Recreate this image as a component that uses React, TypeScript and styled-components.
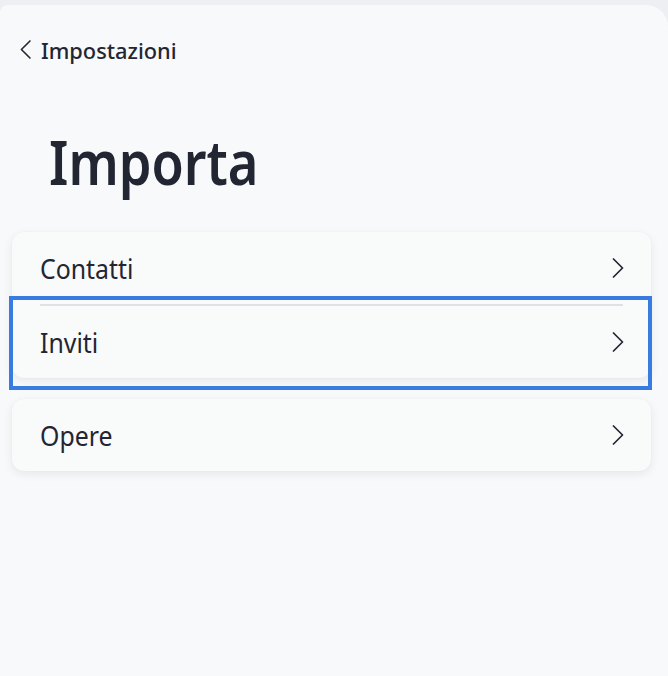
import React from "react";
import styled, { createGlobalStyle } from "styled-components";

const Global = createGlobalStyle`
  html, body { margin: 0; padding: 0; background: #eeeff2; }
  body { font-family: "Noto Sans", "Open Sans", sans-serif; color: #222633; }
`;

const Panel = styled.div`
  margin-top: 5px;
  min-height: 671px;
  background: #f8f9fa;
  border-radius: 8px 22px 0 0;
  box-sizing: border-box;
  padding: 0 17px 0 12px;
`;

const BackBar = styled.div`
  display: flex;
  align-items: center;
  gap: 10px;
  height: 89px;
  padding-left: 8px;
  box-sizing: border-box;
`;

const Condensed = styled.span<{ $sx: number }>`
  display: inline-block;
  transform: scaleX(${(p) => p.$sx});
  transform-origin: left center;
  white-space: nowrap;
`;

const BackLabel = styled.span`
  font-size: 22px;
  font-weight: 500;
  color: #222633;
`;

const Title = styled.h1`
  margin: 0;
  padding: 25px 0 0 37px;
  font-size: 62px;
  font-weight: 600;
  line-height: 84px;
  color: #222633;
`;

const Card = styled.div<{ $top: number }>`
  margin-top: ${(p) => p.$top}px;
  background: #f9fafa;
  border-radius: 12px;
  box-shadow: 0 3px 10px rgba(20, 30, 50, 0.08), 0 0 2px rgba(20, 30, 50, 0.04);
  display: flex;
  flex-direction: column;
`;

const Row = styled.div`
  position: relative;
  height: 72px;
  display: flex;
  align-items: center;
  justify-content: space-between;
  padding: 0 27px 0 28px;
  font-size: 27px;
  color: #222633;
`;

const Divider = styled.div`
  height: 2px;
  margin: 0 28px;
  background: #dfe1e5;
`;

const Highlight = styled.div`
  position: absolute;
  left: -3px;
  right: -1px;
  top: -10px;
  bottom: -12px;
  border: 4px solid #3a7be2;
  pointer-events: none;
`;

const Chevron = ({ left = false, size = 18 }: { left?: boolean; size?: number }) => (
  <svg width={size * 0.6} height={size} viewBox="0 0 12 20" fill="none">
    <path
      d={left ? "M10.5 1 L1.5 10 L10.5 19" : "M1.5 1 L10.5 10 L1.5 19"}
      stroke="#222633"
      strokeWidth="1.7"
      strokeLinecap="round"
      strokeLinejoin="round"
    />
  </svg>
);

export default function App() {
  return (
    <>
      <Global />
      <Panel>
        <BackBar>
          <Chevron left size={19} />
          <BackLabel>
            <Condensed $sx={0.99}>Impostazioni</Condensed>
          </BackLabel>
        </BackBar>
        <Title>
          <Condensed $sx={0.845}>Importa</Condensed>
        </Title>
        <Card $top={29}>
          <Row>
            <Condensed $sx={0.92}>Contatti</Condensed>
            <Chevron size={20} />
          </Row>
          <Divider />
          <Row>
            <Condensed $sx={0.92}>Inviti</Condensed>
            <Chevron size={20} />
            <Highlight />
          </Row>
        </Card>
        <Card $top={21}>
          <Row>
            <Condensed $sx={0.92}>Opere</Condensed>
            <Chevron size={20} />
          </Row>
        </Card>
      </Panel>
    </>
  );
}
